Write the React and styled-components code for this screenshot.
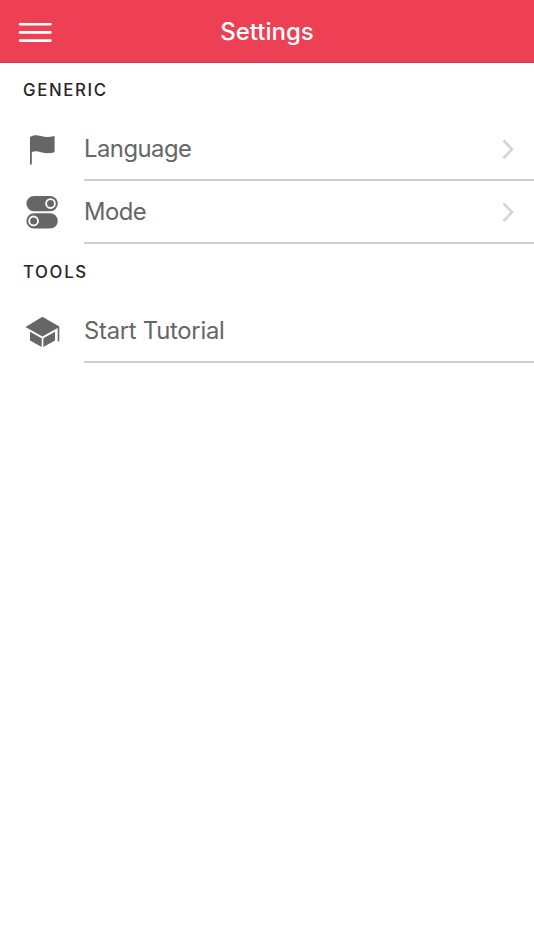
import React from 'react'
import styled, { createGlobalStyle } from 'styled-components'

const colors = {
  header: '#ee4055',
  headerLine: '#c8394b',
  text: '#666',
  title: '#262626',
  line: '#d0d0d2',
  arrow: '#d4d4d4',
}

const GlobalStyle = createGlobalStyle`
  body {
    margin: 0;
    background: #fff;
    font-family: Inter, "Liberation Sans", sans-serif;
  }
`

const Page = styled.div`
  min-height: 100vh;
  background: #fff;
`

const Header = styled.header`
  display: grid;
  grid-template-columns: 70px 1fr 70px;
  align-items: center;
  box-sizing: border-box;
  height: 63px;
  background: ${colors.header};
  border-bottom: 1px solid ${colors.headerLine};
`

const MenuBtn = styled.button`
  display: flex;
  padding: 3px 0 0 18px;
  border: 0;
  background: none;
`

const Title = styled.h1`
  margin: 0;
  padding-top: 1px;
  color: #fff;
  font-size: 24px;
  font-weight: 550;
  letter-spacing: 0;
  line-height: 30px;
  text-align: center;
`

const SectionTitle = styled.h2`
  box-sizing: border-box;
  height: 56px;
  margin: 0;
  padding: ${({ $top }) => $top}px 0 0 23px;
  color: ${colors.title};
  font-size: 16.8px;
  font-weight: 450;
  letter-spacing: 1.65px;
  line-height: 22px;
`

const Row = styled.div`
  display: flex;
  height: ${({ $height }) => $height}px;
`

const RowIcon = styled.div`
  display: flex;
  flex: none;
  box-sizing: border-box;
  width: 84px;
  padding: 14px 0 0 24px;
`

const RowBody = styled.div`
  display: flex;
  flex: 1;
  align-items: center;
  justify-content: space-between;
  box-sizing: border-box;
  padding-right: 19px;
  border-bottom: 2px solid ${colors.line};
`

const Label = styled.span`
  color: ${colors.text};
  font-size: 23.8px;
  letter-spacing: ${({ $spacing }) => $spacing}px;
  line-height: 30px;
`

const MenuIcon = () => (
  <svg width="34" height="22" viewBox="0 0 34 22" stroke="#fff" strokeWidth="2.6" strokeLinecap="round">
    <path d="M2 2.2H32.5M2 10.4H32.5M2 18.6H32.5" />
  </svg>
)

const FlagIcon = () => (
  <svg width="36" height="36" viewBox="0 0 36 36" fill={colors.text}>
    <path d="M6 4C9 2 13 1.8 17 3.1C22 4.5 26 4.1 30.6 3V19.2C26 20.4 22 20.5 17 19.2C13.5 18.2 11 18.1 7.8 18.9V31.6H6Z" />
  </svg>
)

const TogglesIcon = () => (
  <svg width="36" height="36" viewBox="0 0 36 36" fill={colors.text}>
    <rect x="2.4" y="1" width="31.4" height="15.2" rx="7.6" />
    <rect x="2.4" y="18.3" width="31.4" height="15.2" rx="7.6" />
    <g stroke="#fff" strokeWidth="1.8">
      <circle cx="26.5" cy="8.6" r="4.4" />
      <circle cx="9.6" cy="25.9" r="4.4" />
    </g>
  </svg>
)

const CapIcon = () => (
  <svg width="38" height="36" viewBox="0 0 38 36" fill={colors.text}>
    <path d="M18.4 2.8L35.3 12.5V27.2H33.7V14L18.4 22.4L1.5 13.1Z" />
    <path d="M6 17.7L17.7 24.2V32.9L6 26.4Z" />
    <path d="M19.4 24.2L31 17.7V26.4L19.4 32.9Z" />
  </svg>
)

const Arrow = () => (
  <svg width="14" height="22" viewBox="0 0 14 22" fill="none" stroke={colors.arrow} strokeWidth="2.6">
    <path d="M2.5 2.5L11 11.3L2.5 20.1" />
  </svg>
)

const Item = ({ icon, label, height, spacing, arrow }) => (
  <Row $height={height}>
    <RowIcon>{icon}</RowIcon>
    <RowBody>
      <Label $spacing={spacing}>{label}</Label>
      {arrow && <Arrow />}
    </RowBody>
  </Row>
)

const App = () => (
  <Page>
    <GlobalStyle />
    <Header>
      <MenuBtn aria-label="Menu">
        <MenuIcon />
      </MenuBtn>
      <Title>Settings</Title>
    </Header>
    <SectionTitle $top={16}>GENERIC</SectionTitle>
    <Item icon={<FlagIcon />} label="Language" height={62} spacing={-0.5} arrow />
    <Item icon={<TogglesIcon />} label="Mode" height={63} spacing={-0.5} arrow />
    <SectionTitle $top={17}>TOOLS</SectionTitle>
    <Item icon={<CapIcon />} label="Start Tutorial" height={63} spacing={-0.25} />
  </Page>
)

export default App
